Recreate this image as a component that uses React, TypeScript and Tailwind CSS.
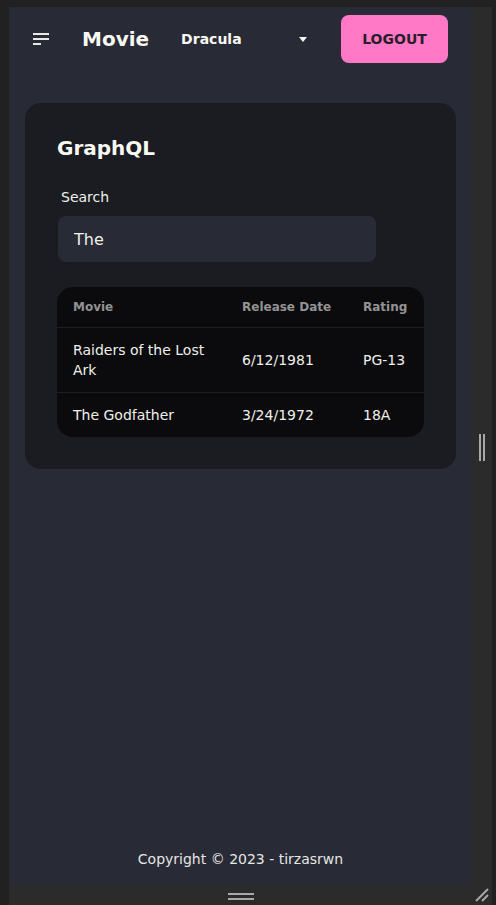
import { useState } from "react";

const movies = [
  { title: "Raiders of the Lost Ark", released: "6/12/1981", rating: "PG-13" },
  { title: "The Godfather", released: "3/24/1972", rating: "18A" },
];

function Navbar() {
  return (
    <div className="flex h-16 items-center px-2 py-2">
      <button className="flex h-12 w-12 flex-col items-start justify-center gap-[3px] pl-4">
        <span className="h-[2px] w-4 bg-[#e8e8e4]" />
        <span className="h-[2px] w-4 bg-[#e8e8e4]" />
        <span className="h-[2px] w-2 bg-[#e8e8e4]" />
      </button>
      <button className="ml-px flex h-12 items-center px-4 text-xl font-bold text-[#f8f8f2]">
        Movie
      </button>
      <div className="flex h-12 w-[160px] items-center justify-between pl-4 pr-[18px]">
        <span className="text-sm font-bold text-[#f8f8f2]">Dracula</span>
        <svg width="8" height="5" viewBox="0 0 8 5" className="mt-px">
          <path d="M0 0h8L4 5z" fill="#f8f8f2" />
        </svg>
      </div>
      <div className="flex-1" />
      <button className="mr-4 flex h-12 w-[107px] items-center justify-center rounded-lg bg-[#ff79c6] text-sm font-bold text-[#2a1d28]">
        LOGOUT
      </button>
    </div>
  );
}

function MovieTable() {
  return (
    <div className="mt-[25px] overflow-hidden rounded-2xl bg-[#0b0b0d]">
      <table className="w-full table-fixed text-left">
        <colgroup>
          <col className="w-[169px]" />
          <col className="w-[121px]" />
          <col className="w-[77px]" />
        </colgroup>
        <thead>
          <tr className="border-b border-[#1d1e25]">
            <th className="whitespace-nowrap px-4 py-3 text-xs font-bold leading-4 text-[#939393]">Movie</th>
            <th className="whitespace-nowrap px-4 py-3 text-xs font-bold leading-4 text-[#939393]">Release Date</th>
            <th className="whitespace-nowrap px-4 py-3 text-xs font-bold leading-4 text-[#939393]">Rating</th>
          </tr>
        </thead>
        <tbody>
          {movies.map((m, i) => (
            <tr key={m.title} className={i < movies.length - 1 ? "border-b border-[#1d1e25]" : ""}>
              <td className="px-4 py-3 text-sm leading-5 text-[#f0f0ea]">{m.title}</td>
              <td className="whitespace-nowrap px-4 py-3 text-sm leading-5 text-[#f0f0ea]">{m.released}</td>
              <td className="whitespace-nowrap px-4 py-3 text-sm leading-5 text-[#f0f0ea]">{m.rating}</td>
            </tr>
          ))}
        </tbody>
      </table>
    </div>
  );
}

export default function App() {
  const [query, setQuery] = useState("The");

  return (
    <div
      className="flex h-[905px] w-[496px] flex-col bg-[#212121] pl-[9px] pr-[4px] pt-[7px]"
      style={{ fontFamily: '"DejaVu Sans", "Noto Sans", sans-serif' }}
    >
      <div className="flex h-[877px]">
        <div className="flex w-[463px] flex-col bg-[#282a36]">
          <Navbar />
          <main className="flex-1 px-4 pt-8">
            <div className="rounded-2xl bg-[#1b1b22] p-8">
              <h2 className="-mt-px text-xl font-bold leading-7 text-[#f8f8f2]">GraphQL</h2>
              <label className="mt-[17px] block px-1 pb-[9px] pt-2 text-sm leading-5 text-[#f0f0ea]">Search</label>
              <input
                value={query}
                onChange={(e) => setQuery(e.target.value)}
                className="ml-px h-[46px] w-[318px] rounded-lg bg-[#282a36] px-4 text-base text-[#f0f0ea] outline-none"
              />
              <MovieTable />
            </div>
          </main>
          <footer className="pb-[15px] text-center text-sm leading-5 text-[#e6e6e2]">
            Copyright © 2023 - tirzasrwn
          </footer>
        </div>
        <div className="flex w-[20px] items-center bg-[#2b2b2b] pl-[7px]">
          <div className="mt-[3px] flex gap-[2px]">
            <span className="h-[27px] w-[2px] bg-[#a8a8a8]" />
            <span className="h-[27px] w-[2px] bg-[#a8a8a8]" />
          </div>
        </div>
      </div>
      <div className="relative flex h-[21px] justify-center bg-[#2b2b2b] pr-[20px]">
        <div className="mt-[9px] flex flex-col gap-[3px]">
          <span className="h-[2px] w-[26px] bg-[#a8a8a8]" />
          <span className="h-[2px] w-[26px] bg-[#a8a8a8]" />
        </div>
        <svg width="14" height="14" viewBox="0 0 14 14" className="absolute bottom-[3px] right-[3px]">
          <path d="M1 13L13 1M7 13L13 7" stroke="#a8a8a8" strokeWidth="2" />
        </svg>
      </div>
    </div>
  );
}
